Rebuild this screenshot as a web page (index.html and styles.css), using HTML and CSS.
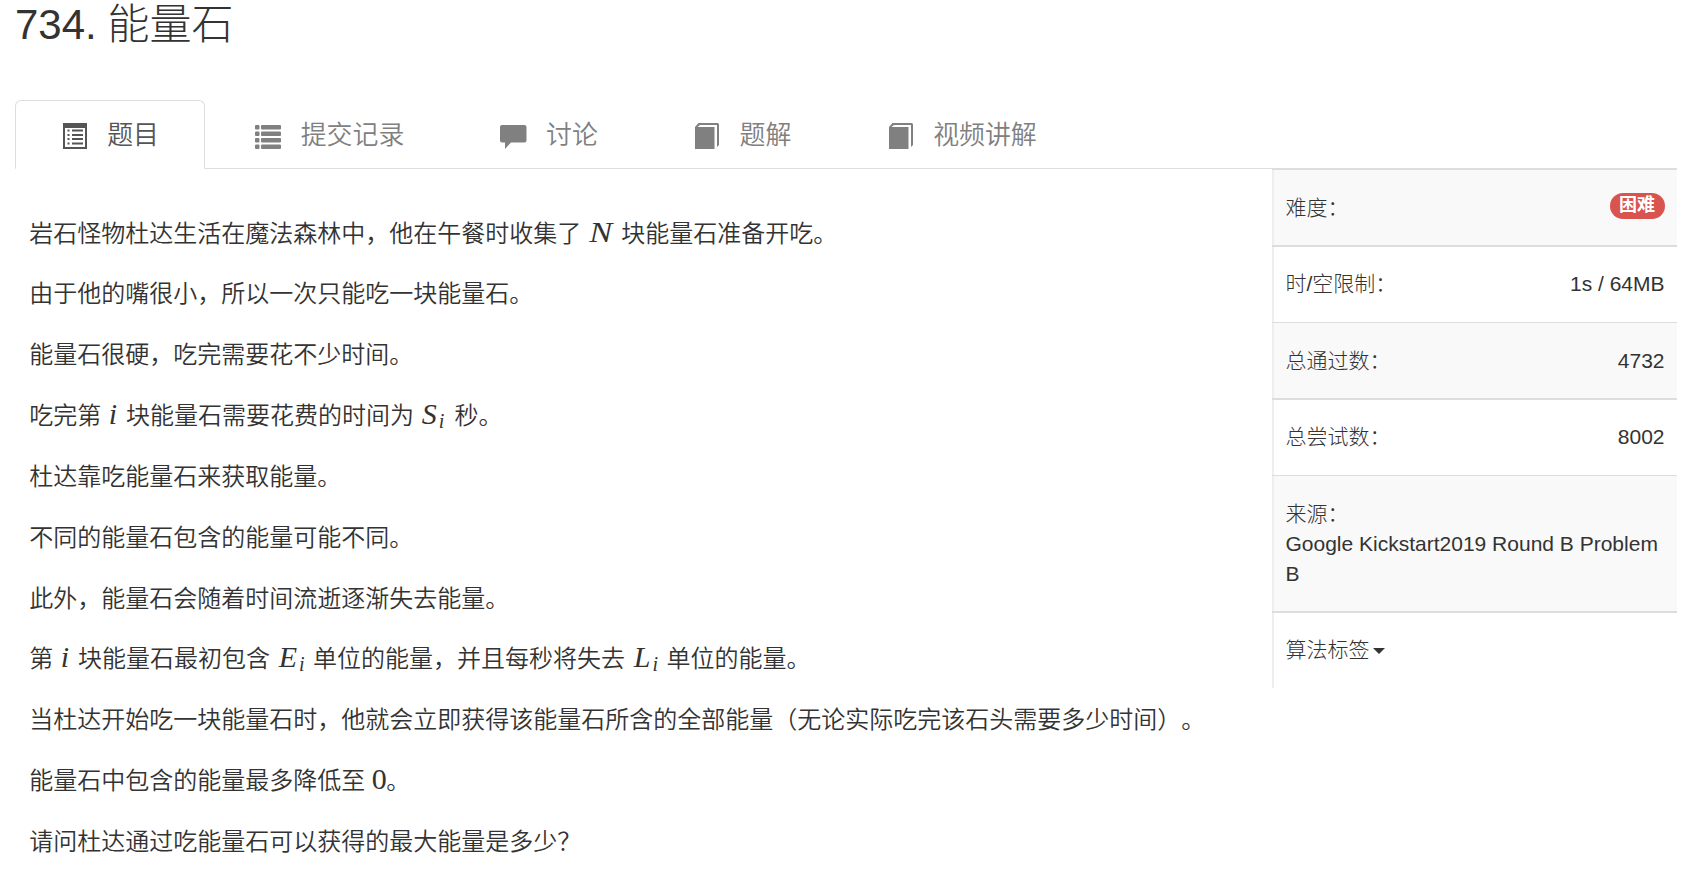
FILE: index.html
```
<!DOCTYPE html>
<html lang="zh-CN">
<head>
  <meta charset="UTF-8">
  <title>734. 能量石</title>
  <meta name="viewport" content="width=device-width, initial-scale=1.0">
  <link rel="stylesheet" href="styles.css">
</head>
<body>
  <div class="container">
    <h1 class="problem-title">734. <span class="title-name">能量石</span></h1>

    <nav class="tabs">
      <a class="tab active">
        <svg class="icon" viewBox="0 0 26 26"><path fill-rule="evenodd" d="M2 0H26V26H2ZM4 5V24H24V5Z"/><path d="M6.500 6.500h2v2h-2zM11 6.500h11v2H11zM6.500 11h2v2h-2zM11 11h11v2H11zM6.500 15h2v2h-2zM11 15h11v2H11zM6.500 19.500h2v2h-2zM11 19.500h11v2H11z"/></svg>
        <span>题目</span>
      </a>
      <a class="tab">
        <svg class="icon" viewBox="0 0 26 26"><rect x="0" y="2" width="4.500" height="4.500" rx="1"/><rect x="6" y="2" width="20" height="4.500" rx="1"/><rect x="0" y="8.500" width="4.500" height="4.500" rx="1"/><rect x="6" y="8.500" width="20" height="4.500" rx="1"/><rect x="0" y="15" width="4.500" height="4.500" rx="1"/><rect x="6" y="15" width="20" height="4.500" rx="1"/><rect x="0" y="21.500" width="4.500" height="4.500" rx="1"/><rect x="6" y="21.500" width="20" height="4.500" rx="1"/></svg>
        <span>提交记录</span>
      </a>
      <a class="tab">
        <svg class="icon" viewBox="0 0 26 26"><path d="M2 2H24.500Q26.500 2 26.500 4V17.500Q26.500 19.500 24.500 19.500H11L5 26V19.500H2Q0 19.500 0 17.500V4Q0 2 2 2Z"/></svg>
        <span>讨论</span>
      </a>
      <a class="tab">
        <svg class="icon" viewBox="0 0 26 26"><path d="M2 4L5.500 0H24.500Q26 0 26 1.500V22L24 24V2H7L4.500 4H21.500V26H2Z"/></svg>
        <span>题解</span>
      </a>
      <a class="tab">
        <svg class="icon" viewBox="0 0 26 26"><path d="M2 4L5.500 0H24.500Q26 0 26 1.500V22L24 24V2H7L4.500 4H21.500V26H2Z"/></svg>
        <span>视频讲解</span>
      </a>
    </nav>

    <div class="content">
      <main class="description">
        <p>岩石怪物杜达生活在魔法森林中，他在午餐时收集了 <span class="math var-n">N</span> 块能量石准备开吃。</p>
        <p>由于他的嘴很小，所以一次只能吃一块能量石。</p>
        <p>能量石很硬，吃完需要花不少时间。</p>
        <p>吃完第 <span class="math var-i">i</span> 块能量石需要花费的时间为 <span class="math var-s">S<sub>i</sub></span> 秒。</p>
        <p>杜达靠吃能量石来获取能量。</p>
        <p>不同的能量石包含的能量可能不同。</p>
        <p>此外，能量石会随着时间流逝逐渐失去能量。</p>
        <p>第 <span class="math var-i">i</span> 块能量石最初包含 <span class="math var-e">E<sub>i</sub></span> 单位的能量，并且每秒将失去 <span class="math var-l">L<sub>i</sub></span> 单位的能量。</p>
        <p>当杜达开始吃一块能量石时，他就会立即获得该能量石所含的全部能量（无论实际吃完该石头需要多少时间）。</p>
        <p>能量石中包含的能量最多降低至 <span class="math num">0</span>。</p>
        <p>请问杜达通过吃能量石可以获得的最大能量是多少？</p>
      </main>

      <aside class="info">
        <div class="row striped first">
          <div class="cell"><span>难度：</span><span class="badge">困难</span></div>
        </div>
        <div class="row thick">
          <div class="cell"><span>时/空限制：</span><span>1s / 64MB</span></div>
        </div>
        <div class="row striped">
          <div class="cell"><span>总通过数：</span><span>4732</span></div>
        </div>
        <div class="row thick">
          <div class="cell"><span>总尝试数：</span><span>8002</span></div>
        </div>
        <div class="row striped source">
          <div class="cell"><span>来源：<br>Google Kickstart2019 Round B Problem B</span></div>
        </div>
        <div class="row thick">
          <div class="cell"><span>算法标签<i class="caret"></i></span></div>
        </div>
      </aside>
    </div>
  </div>
</body>
</html>
```

FILE: styles.css
```
* {
  box-sizing: border-box;
}
body {
  margin: 0;
  height: 870px;
  overflow: hidden;
  background: #fff;
  color: #333;
  font-family: "Liberation Sans", "Noto Sans CJK SC", sans-serif;
  text-spacing-trim: space-all;
}
.container {
  padding: 0 20px 0 15px;
}
.problem-title {
  margin: 0;
  height: 100px;
  font-size: 42px;
  font-weight: 300;
  line-height: 50px;
}
.title-name {
  margin-left: -1px;
}

/* Tabs */
.tabs {
  display: flex;
  gap: 3.400px;
  height: 69px;
  border-bottom: 1px solid #ddd;
}
.tab {
  display: flex;
  align-items: center;
  gap: 20.200px;
  height: 69px;
  padding: 0 45.200px 0 45px;
  border: 1px solid transparent;
  color: #808080;
  font-size: 25.900px;
  font-weight: 350;
  line-height: 36px;
}
.tab.active {
  background: #fff;
  border-color: #ddd;
  border-bottom-color: transparent;
  border-radius: 6px 6px 0 0;
  color: #555;
}
.icon {
  width: 26px;
  height: 26px;
  margin-top: 3px;
  fill: currentColor;
  overflow: visible;
}

/* Problem text */
.content {
  display: flex;
  align-items: flex-start;
  justify-content: space-between;
}
.description {
  padding: 45.500px 0 0 14.200px;
  font-size: 24px;
  font-weight: 350;
  white-space: nowrap;
}
.description p {
  margin: 0 0 22.850px;
  height: 38px;
  line-height: 38px;
}
.math {
  display: inline-block;
  font: italic 30px/30px "Liberation Serif", serif;
}
.math sub {
  margin-left: 2px;
  font-size: 20px;
  line-height: 0;
  vertical-align: -4px;
}
.var-n {
  width: 26.700px;
  padding-left: 1px;
  transform: scaleX(1.15);
  transform-origin: left;
}
.var-i {
  width: 11.500px;
  padding-left: 1px;
}
.var-s {
  width: 27.100px;
  padding-left: 1px;
}
.var-e {
  width: 29.700px;
  padding-left: 2px;
}
.var-l {
  width: 28px;
  padding-left: 2px;
}
.num {
  width: 14.500px;
  font-style: normal;
}

/* Side info */
.info {
  width: 405px;
  font-size: 21px;
  font-weight: 300;
  line-height: 30px;
}
.row {
  display: flex;
  height: 77px;
  border-top: 1px solid #ddd;
}
.row.first,
.row.striped {
  height: 76px;
}
.row.thick {
  border-top-width: 2px;
}
.row.striped {
  background: #f9f9f9;
}
.row.striped.source {
  height: 136px;
}
.cell {
  flex: 1;
  display: flex;
  align-items: center;
  justify-content: space-between;
  padding: 0 12.500px 1px 11.500px;
  border-left: 2px solid #eee;
}
.striped .cell {
  padding-bottom: 0;
}
.badge {
  height: 26px;
  margin-bottom: 3px;
  padding: 0 9.500px;
  border-radius: 13px;
  background: #d9534f;
  color: #fff;
  font-size: 18px;
  font-weight: bold;
  line-height: 25px;
}
.caret {
  display: inline-block;
  margin-left: 3px;
  vertical-align: 3px;
  border-top: 6px solid #333;
  border-left: 6px solid transparent;
  border-right: 6px solid transparent;
}
```
